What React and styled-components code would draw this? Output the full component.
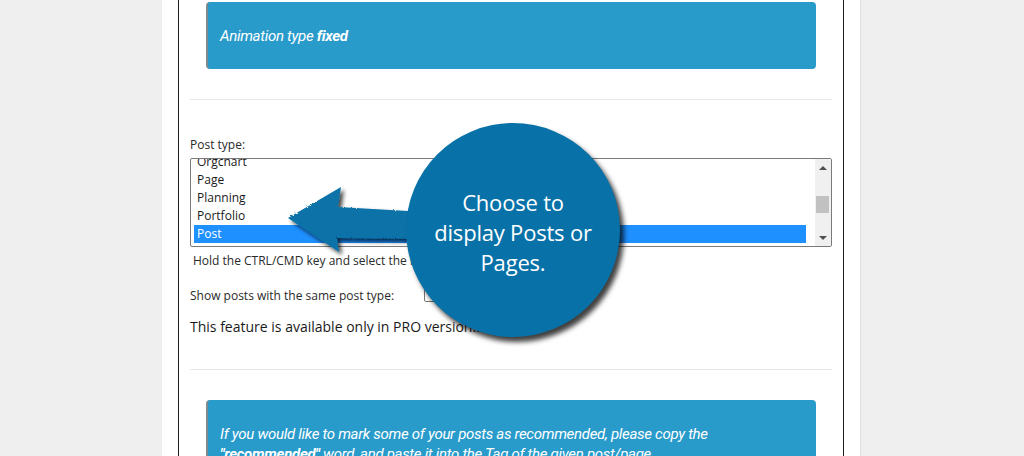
import styled, { createGlobalStyle } from "styled-components";

const GlobalStyle = createGlobalStyle`
  html, body {
    margin: 0;
    padding: 0;
    background: #efefef;
    overflow: hidden;
  }
`;

const Page = styled.div`
  position: relative;
  width: 1024px;
  height: 456px;
  overflow: hidden;
  background: #efefef;
  font-family: "Open Sans", "Noto Sans", sans-serif;
`;

const Panel = styled.div`
  width: 666px;
  height: 456px;
  margin-left: 162px;
  padding: 0 16px;
  background: #ffffff;
  border-right: 1px solid #dedede;
`;

const Frame = styled.div`
  height: 100%;
  border-left: 1px solid #1d1d1d;
  border-right: 1px solid #1d1d1d;
  padding: 2px 11px 0;
`;

const Notice = styled.div`
  margin: ${(p) => p.$top || 0}px 16px 0;
  height: ${(p) => p.$height}px;
  padding: ${(p) => p.$pad || "0 12px"};
  box-sizing: border-box;
  display: flex;
  flex-direction: column;
  justify-content: ${(p) => (p.$center ? "center" : "flex-start")};
  background: #299bcb;
  border-radius: 4px;
  border-left: 2px solid #7d8a90;
  color: #ffffff;
  font-family: Roboto, "Liberation Sans", sans-serif;
  font-style: italic;
  font-size: 15px;
  line-height: 20px;
  letter-spacing: -0.3px;

  b {
    font-weight: 700;
  }
`;

const Divider = styled.hr`
  border: none;
  height: 1px;
  background: #e8e8e8;
  margin: ${(p) => p.$top}px 0 0;
`;

const Label = styled.div`
  margin-top: ${(p) => p.$top || 0}px;
  font-size: 12px;
  line-height: 16px;
  color: #2a2a2a;
  padding-left: ${(p) => p.$indent || 0}px;
`;

const ListBox = styled.div`
  margin-top: 5px;
  height: 87px;
  border: 1px solid #7a7a7a;
  border-radius: 2px;
  display: flex;
  overflow: hidden;
`;

const Options = styled.div`
  flex: 1;
  padding: 0 9px 0 3px;
  margin-top: -6px;
`;

const Option = styled.div`
  height: 18px;
  line-height: 18px;
  padding-left: 3px;
  font-size: 12px;
  color: ${(p) => (p.$selected ? "#ffffff" : "#1a1a1a")};
  background: ${(p) => (p.$selected ? "#1e90ff" : "transparent")};
`;

const Scrollbar = styled.div`
  width: 16px;
  background: #f0f0f0;
  display: flex;
  flex-direction: column;
  align-items: center;
  justify-content: space-between;
  padding: 7px 0 6px;
  box-sizing: border-box;
  position: relative;
`;

const Arrow = styled.div`
  width: 0;
  height: 0;
  border-left: 4px solid transparent;
  border-right: 4px solid transparent;
  ${(p) =>
    p.$down
      ? "border-top: 4px solid #505050;"
      : "border-bottom: 4px solid #505050;"}
`;

const Thumb = styled.div`
  position: absolute;
  left: 1px;
  top: 37px;
  width: 13px;
  height: 17px;
  background: #c1c1c1;
`;

const CheckRow = styled.div`
  margin-top: 18px;
  display: flex;
  align-items: center;
  height: 16px;
  font-size: 12px;
  color: #2a2a2a;
`;

const CheckBox = styled.span`
  margin-left: 30px;
  width: 11px;
  height: 11px;
  border: 1px solid #767676;
  border-radius: 2px;
`;

const ProNote = styled.div`
  margin-top: 14px;
  font-size: 14px;
  line-height: 20px;
  color: #1a1a1a;
`;

const Bubble = styled.div`
  position: absolute;
  left: 406px;
  top: 123px;
  width: 214px;
  height: 214px;
  border-radius: 50%;
  background: #0872a8;
  box-shadow: 4px 5px 5px rgba(0, 0, 0, 0.75);
  display: flex;
  align-items: center;
  justify-content: center;
  text-align: center;
  color: #ffffff;
  font-family: "Open Sans", "Noto Sans", sans-serif;
  font-size: 22px;
  line-height: 30px;
  letter-spacing: -0.2px;
  padding-top: 4px;
  box-sizing: border-box;
`;

const Pointer = styled.svg`
  position: absolute;
  left: 0;
  top: 0;
  width: 1024px;
  height: 456px;
  pointer-events: none;
`;

const items = ["Orgchart", "Page", "Planning", "Portfolio", "Post", "Product"];

export default function App() {
  return (
    <Page>
      <GlobalStyle />
      <Panel>
        <Frame>
          <Notice $height={67} $center>
            <div>
              Animation type <b>fixed</b>
            </div>
          </Notice>
          <Divider $top={30} />
          <Label $top={37}>Post type:</Label>
          <ListBox>
            <Options>
              {items.map((item) => (
                <Option key={item} $selected={item === "Post"}>
                  {item}
                </Option>
              ))}
            </Options>
            <Scrollbar>
              <Arrow />
              <Thumb />
              <Arrow $down />
            </Scrollbar>
          </ListBox>
          <Label $top={6} $indent={3}>
            Hold the CTRL/CMD key and select the multiple post types.
          </Label>
          <CheckRow>
            Show posts with the same post type:
            <CheckBox />
          </CheckRow>
          <ProNote>This feature is available only in PRO version...</ProNote>
          <Divider $top={32} />
          <Notice $top={30} $height={80} $pad="24px 12px 0">
            <div>
              If you would like to mark some of your posts as recommended,
              please copy the
            </div>
            <div>
              <b>"recommended"</b> word, and paste it into the Tag of the given
              post/page.
            </div>
          </Notice>
        </Frame>
      </Panel>

      <Pointer viewBox="0 0 1024 456">
        <defs>
          <filter id="rough" x="-10%" y="-20%" width="130%" height="150%">
            <feTurbulence type="fractalNoise" baseFrequency="0.9" numOctaves="2" result="n" />
            <feDisplacementMap in="SourceGraphic" in2="n" scale="2.5" result="d" />
            <feDropShadow dx="3" dy="3" stdDeviation="2" floodColor="#000" floodOpacity="0.75" />
          </filter>
        </defs>
        <path
          d="M288 218 L341 187 L338 207 L425 212 L425 239 L337 238 L339 252 Z"
          fill="#0872a8"
          filter="url(#rough)"
        />
      </Pointer>
      <Bubble>
        <div>
          Choose to
          <br />
          display Posts or
          <br />
          Pages.
        </div>
      </Bubble>
    </Page>
  );
}
